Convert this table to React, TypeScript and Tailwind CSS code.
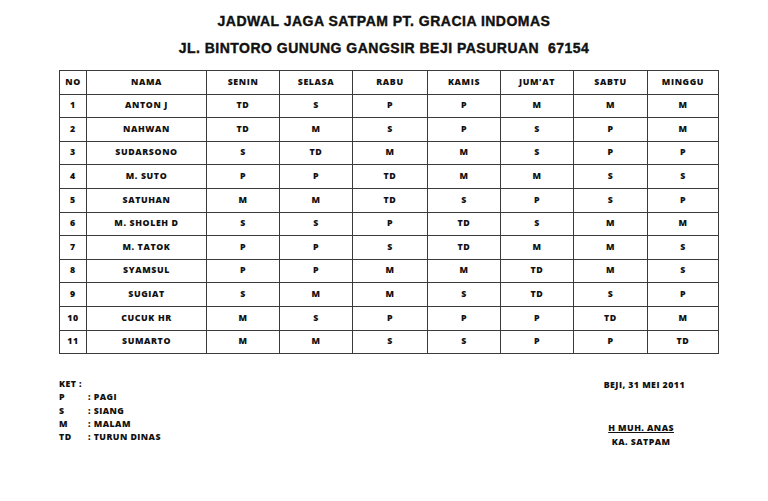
const rows: [string, string[]][] = [
  ["ANTON J", ["TD", "S", "P", "P", "M", "M", "M"]],
  ["NAHWAN", ["TD", "M", "S", "P", "S", "P", "M"]],
  ["SUDARSONO", ["S", "TD", "M", "M", "S", "P", "P"]],
  ["M. SUTO", ["P", "P", "TD", "M", "M", "S", "S"]],
  ["SATUHAN", ["M", "M", "TD", "S", "P", "S", "P"]],
  ["M. SHOLEH D", ["S", "S", "P", "TD", "S", "M", "M"]],
  ["M. TATOK", ["P", "P", "S", "TD", "M", "M", "S"]],
  ["SYAMSUL", ["P", "P", "M", "M", "TD", "M", "S"]],
  ["SUGIAT", ["S", "M", "M", "S", "TD", "S", "P"]],
  ["CUCUK HR", ["M", "S", "P", "P", "P", "TD", "M"]],
  ["SUMARTO", ["M", "M", "S", "S", "P", "P", "TD"]],
];

const days = ["SENIN", "SELASA", "RABU", "KAMIS", "JUM'AT", "SABTU", "MINGGU"];

const cell = "border border-[#3a3a3a] text-center align-middle p-0";

const legend = [
  ["P", "PAGI"],
  ["S", "SIANG"],
  ["M", "MALAM"],
  ["TD", "TURUN DINAS"],
];

export default function App() {
  return (
    <div className="w-[768px] h-[501px] bg-white text-black overflow-hidden" style={{ fontFamily: '"Open Sans", sans-serif' }}>
      {/* Heading */}
      <div
        className="pt-[12px] flex flex-col items-center font-bold text-[14px] leading-[19px] text-[#111] [-webkit-text-stroke:0.4px_#111]"
        style={{ fontFamily: '"Liberation Sans", Arial, sans-serif' }}
      >
        <div className="whitespace-nowrap tracking-[0.035em]">JADWAL JAGA SATPAM PT. GRACIA INDOMAS</div>
        <div className="mt-[8px] whitespace-nowrap tracking-[0.035em]">JL. BINTORO GUNUNG GANGSIR BEJI PASURUAN&nbsp; 67154</div>
      </div>

      {/* Table */}
      <table className="mt-[12px] ml-[59px] border-collapse table-fixed text-[8.8px] font-extrabold tracking-[0.07em] text-[#111]">
        <colgroup>
          <col className="w-[27px]" />
          <col className="w-[120px]" />
          <col className="w-[73px]" />
          <col className="w-[73px]" />
          <col className="w-[75px]" />
          <col className="w-[73px]" />
          <col className="w-[73px]" />
          <col className="w-[74px]" />
          <col className="w-[71px]" />
        </colgroup>
        <thead>
          <tr className="h-[23.6px]">
            <th className={cell + " font-extrabold"}>NO</th>
            <th className={cell + " font-extrabold"}>NAMA</th>
            {days.map((d) => (
              <th key={d} className={cell + " font-extrabold"}>{d}</th>
            ))}
          </tr>
        </thead>
        <tbody>
          {rows.map(([name, shifts], i) => (
            <tr key={name} className="h-[23.6px]">
              <td className={cell}>{i + 1}</td>
              <td className={cell}>{name}</td>
              {shifts.map((s, j) => (
                <td key={j} className={cell}>{s}</td>
              ))}
            </tr>
          ))}
        </tbody>
      </table>

      {/* Footer */}
      <div className="flex justify-between text-[8.8px] font-extrabold tracking-[0.05em] text-[#111]">
        <div className="ml-[59px] mt-[24px] leading-[13.3px]">
          <div>KET :</div>
          {legend.map(([k, v]) => (
            <div key={k} className="flex">
              <span className="w-[29px]">{k}</span>
              <span>: {v}</span>
            </div>
          ))}
        </div>
        <div className="mr-[83px] mt-[25px] flex flex-col items-end leading-[13.3px]">
          <div>BEJI, 31 MEI 2011</div>
          <div className="mt-[30px] mr-[11px] flex flex-col items-center">
            <div className="underline underline-offset-[1px]">H MUH. ANAS</div>
            <div className="leading-[12px]">KA. SATPAM</div>
          </div>
        </div>
      </div>
    </div>
  );
}
